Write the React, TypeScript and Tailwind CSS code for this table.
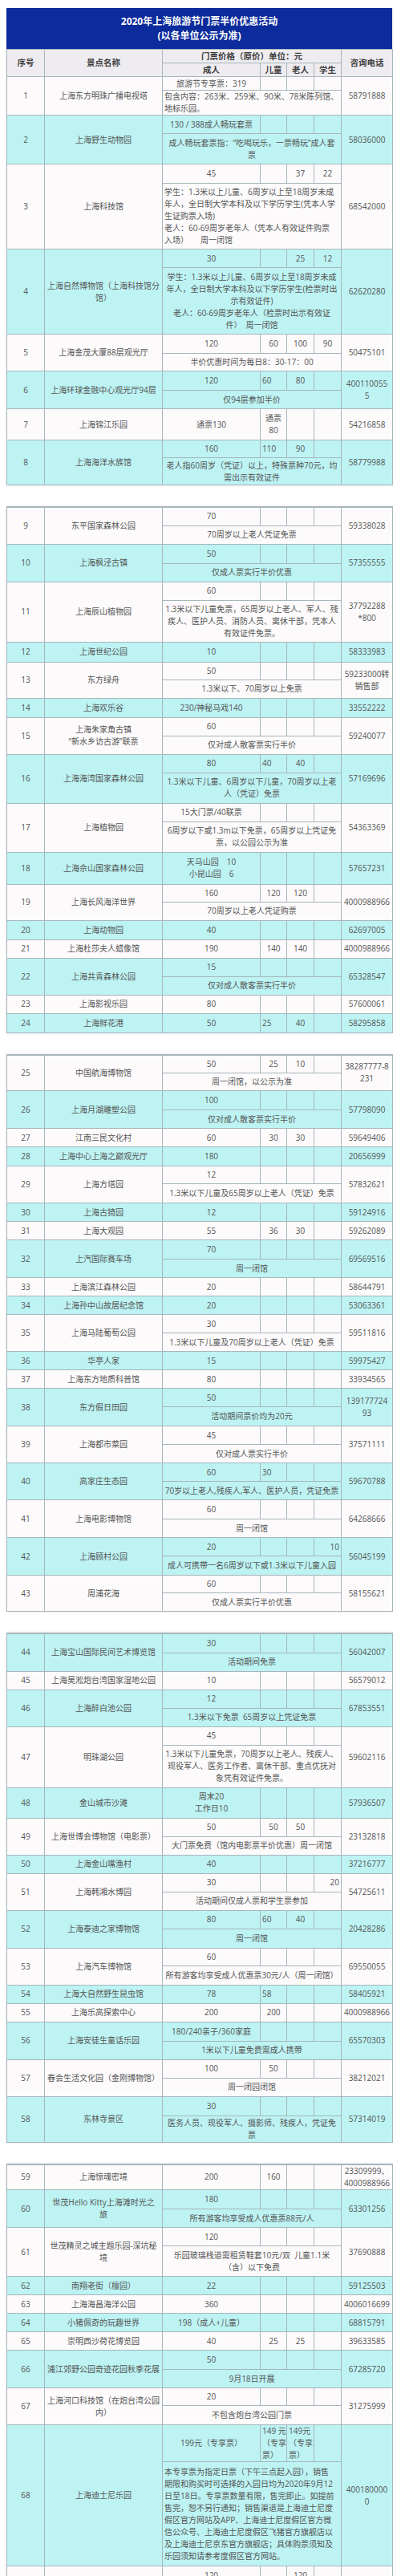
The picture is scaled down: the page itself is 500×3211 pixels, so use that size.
import React from 'react';

type P = string | { t: string; a: 'l' | 'r' };
type Row = {
  n: number;
  name: string;
  p: P[];
  tel: string;
  h: string;
  note?: string;
  nh?: string;
  left?: boolean;
};

const L = (t: string): P => ({ t, a: 'l' });
const R = (t: string): P => ({ t, a: 'r' });
const one = (t: string): P[] => [t, '', '', ''];

const seg1: Row[] = [
  { n: 1, name: '上海东方明珠广播电视塔', p: one('旅游节专享票：319'), tel: '58791888', h: 'h-[17px]', note: '包含内容：263米、259米、90米、78米陈列馆、\n地标乐园。', nh: 'h-[30px]', left: true },
  { n: 2, name: '上海野生动物园', p: one('130 / 388成人畅玩套票'), tel: '58036000', h: 'h-[23px]', note: '成人畅玩套票指：“吃喝玩乐，一票畅玩”成人套\n票', nh: 'h-[38px]' },
  { n: 3, name: '上海科技馆', p: ['45', '', '37', '22'], tel: '68542000', h: 'h-[24px]', note: '学生：1.3米以上儿童、6周岁以上至18周岁未成\n年人，全日制大学本科及以下学历学生(凭本人学\n生证购票入场)\n老人：60-69周岁老年人（凭本人有效证件购票\n入场）　　周一闭馆', nh: 'h-[82px]', left: true },
  { n: 4, name: '上海自然博物馆（上海科技馆分\n馆）', p: ['30', '', '25', '12'], tel: '62620280', h: 'h-[23px]', note: '学生：1.3米以上儿童、6周岁以上至18周岁未成\n年人，全日制大学本科及以下学历学生(检票时出\n示有效证件)\n老人：60-69周岁老年人（检票时出示有效证\n件）　周一闭馆', nh: 'h-[83px]' },
  { n: 5, name: '上海金茂大厦88层观光厅', p: ['120', '60', '100', '90'], tel: '50475101', h: 'h-[24px]', note: '半价优惠时间为每日8：30-17：00', nh: 'h-[22px]' },
  { n: 6, name: '上海环球金融中心观光厅94层', p: ['120', L('60'), '80', ''], tel: '400110055\n5', h: 'h-[24px]', note: '仅94层参加半价', nh: 'h-[23px]' },
  { n: 7, name: '上海锦江乐园', p: ['通票130', '通票\n80', '', ''], tel: '54216858', h: 'h-[39px]' },
  { n: 8, name: '上海海洋水族馆', p: ['160', L('110'), '90', ''], tel: '58779988', h: 'h-[22px]', note: '老人指60周岁（凭证）以上，特殊票种70元，均\n需出示有效证件', nh: 'h-[34px]' },
];

const seg2: Row[] = [
  { n: 9, name: '东平国家森林公园', p: one('70'), tel: '59338028', h: 'h-[23px]', note: '70周岁以上老人凭证免票', nh: 'h-[23px]' },
  { n: 10, name: '上海枫泾古镇', p: one('50'), tel: '57355555', h: 'h-[24px]', note: '仅成人票实行半价优惠', nh: 'h-[23px]' },
  { n: 11, name: '上海辰山植物园', p: one('60'), tel: '37792288\n*800', h: 'h-[23px]', note: '1.3米以下儿童免票，65周岁以上老人、军人、残\n疾人、医护人员、消防人员、离休干部，凭本人\n有效证件免票。', nh: 'h-[52px]' },
  { n: 12, name: '上海世纪公园', p: one('10'), tel: '58333983', h: 'h-[25px]' },
  { n: 13, name: '东方绿舟', p: one('50'), tel: '59233000转\n销售部', h: 'h-[22px]', note: '1.3米以下、70周岁以上免票', nh: 'h-[23px]' },
  { n: 14, name: '上海欢乐谷', p: one('230/神秘马戏140'), tel: '33552222', h: 'h-[24px]' },
  { n: 15, name: '上海朱家角古镇\n“新水乡访古游”联票', p: one('60'), tel: '59240077', h: 'h-[23px]', note: '仅对成人散客票实行半价', nh: 'h-[23px]' },
  { n: 16, name: '上海海湾国家森林公园', p: ['80', L('40'), '40', ''], tel: '57169696', h: 'h-[23px]', note: '1.3米以下儿童、6周岁以下儿童，70周岁以上老\n人（凭证）免票', nh: 'h-[38px]' },
  { n: 17, name: '上海植物园', p: one('15大门票/40联票'), tel: '54363369', h: 'h-[23px]', note: '6周岁以下或1.3m以下免票，65周岁以上凭证免\n票，以公园公示为准', nh: 'h-[38px]' },
  { n: 18, name: '上海佘山国家森林公园', p: one('天马山园　10\n小昆山园　6'), tel: '57657231', h: 'h-[40px]' },
  { n: 19, name: '上海长风海洋世界', p: ['160', '120', '120', ''], tel: '4000988966', h: 'h-[22px]', note: '70周岁以上老人凭证购票', nh: 'h-[23px]' },
  { n: 20, name: '上海动物园', p: one('40'), tel: '62697005', h: 'h-[24px]' },
  { n: 21, name: '上海杜莎夫人蜡像馆', p: ['190', '140', '140', ''], tel: '4000988966', h: 'h-[23px]' },
  { n: 22, name: '上海共青森林公园', p: one('15'), tel: '65328547', h: 'h-[23px]', note: '仅对成人散客票实行半价', nh: 'h-[23px]' },
  { n: 23, name: '上海影视乐园', p: one('80'), tel: '57600061', h: 'h-[23px]' },
  { n: 24, name: '上海鲜花港', p: ['50', L('25'), '40', ''], tel: '58295858', h: 'h-[24px]' },
];

const seg3: Row[] = [
  { n: 25, name: '中国航海博物馆', p: ['50', '25', '10', ''], tel: '38287777-8\n231', h: 'h-[23px]', note: '周一闭馆，以公示为准', nh: 'h-[22px]' },
  { n: 26, name: '上海月湖雕塑公园', p: one('100'), tel: '57798090', h: 'h-[24px]', note: '仅对成人散客票实行半价', nh: 'h-[23px]' },
  { n: 27, name: '江南三民文化村', p: ['60', '30', '30', ''], tel: '59649406', h: 'h-[23px]' },
  { n: 28, name: '上海中心上海之巅观光厅', p: one('180'), tel: '20656999', h: 'h-[24px]' },
  { n: 29, name: '上海方塔园', p: one('12'), tel: '57832621', h: 'h-[22px]', note: '1.3米以下儿童及65周岁以上老人（凭证）免票', nh: 'h-[24px]' },
  { n: 30, name: '上海古猗园', p: one('12'), tel: '59124916', h: 'h-[23px]' },
  { n: 31, name: '上海大观园', p: ['55', '36', '30', ''], tel: '59262089', h: 'h-[23px]' },
  { n: 32, name: '上汽国际赛车场', p: one('70'), tel: '69569516', h: 'h-[24px]', note: '周一闭馆', nh: 'h-[23px]' },
  { n: 33, name: '上海滨江森林公园', p: one('20'), tel: '58644791', h: 'h-[23px]' },
  { n: 34, name: '上海孙中山故居纪念馆', p: one('20'), tel: '53063361', h: 'h-[23px]' },
  { n: 35, name: '上海马陆葡萄公园', p: one('30'), tel: '59511816', h: 'h-[23px]', note: '1.3米以下儿童及70周岁以上老人（凭证）免票', nh: 'h-[23px]' },
  { n: 36, name: '华亭人家', p: one('15'), tel: '59975427', h: 'h-[23px]' },
  { n: 37, name: '上海东方地质科普馆', p: one('80'), tel: '33934565', h: 'h-[23px]' },
  { n: 38, name: '东方假日田园', p: one('50'), tel: '139177724\n93', h: 'h-[23px]', note: '活动期间票价均为20元', nh: 'h-[24px]' },
  { n: 39, name: '上海都市菜园', p: one('45'), tel: '37571111', h: 'h-[23px]', note: '仅对成人票实行半价', nh: 'h-[23px]' },
  { n: 40, name: '高家庄生态园', p: ['60', L('30'), '', ''], tel: '59670788', h: 'h-[23px]', note: '70岁以上老人,残疾人,军人、医护人员，凭证免票', nh: 'h-[23px]' },
  { n: 41, name: '上海电影博物馆', p: one('60'), tel: '64268666', h: 'h-[24px]', note: '周一闭馆', nh: 'h-[23px]' },
  { n: 42, name: '上海顾村公园', p: ['20', '', '', R('10')], tel: '56045199', h: 'h-[23px]', note: '成人可携带一名6周岁以下或1.3米以下儿童入园', nh: 'h-[24px]' },
  { n: 43, name: '周浦花海', p: one('60'), tel: '58155621', h: 'h-[22px]', note: '仅成人票实行半价优惠', nh: 'h-[23px]' },
];

const seg4: Row[] = [
  { n: 44, name: '上海宝山国际民间艺术博览馆', p: one('30'), tel: '56042007', h: 'h-[24px]', note: '活动期间免票', nh: 'h-[23px]' },
  { n: 45, name: '上海吴淞炮台湾国家湿地公园', p: one('10'), tel: '56579012', h: 'h-[23px]' },
  { n: 46, name: '上海醉白池公园', p: one('12'), tel: '67853551', h: 'h-[23px]', note: '1.3米以下免票  65周岁以上凭证免票', nh: 'h-[23px]' },
  { n: 47, name: '明珠湖公园', p: one('45'), tel: '59602116', h: 'h-[23px]', note: '1.3米以下儿童免票，70周岁以上老人、残疾人、\n现役军人、医务工作者、离休干部、重点优抚对\n象凭有效证件免票。', nh: 'h-[53px]' },
  { n: 48, name: '金山城市沙滩', p: one('周末20\n工作日10'), tel: '57936507', h: 'h-[38px]' },
  { n: 49, name: '上海世博会博物馆（电影票）', p: ['50', '50', '50', ''], tel: '23132818', h: 'h-[23px]', note: '大门票免费（馆内电影票半价优惠）周一闭馆', nh: 'h-[23px]' },
  { n: 50, name: '上海金山嘴渔村', p: one('40'), tel: '37216777', h: 'h-[23px]' },
  { n: 51, name: '上海韩湘水博园', p: ['30', '', '', R('20')], tel: '54725611', h: 'h-[23px]', note: '活动期间仅成人票和学生票参加', nh: 'h-[23px]' },
  { n: 52, name: '上海泰迪之家博物馆', p: ['80', L('60'), '40', ''], tel: '20428286', h: 'h-[23px]', note: '周一闭馆', nh: 'h-[24px]' },
  { n: 53, name: '上海汽车博物馆', p: one('60'), tel: '69550055', h: 'h-[22px]', note: '所有游客均享受成人优惠票30元/人（周一闭馆）', nh: 'h-[24px]' },
  { n: 54, name: '上海大自然野生昆虫馆', p: ['78', L('58'), '', ''], tel: '58405921', h: 'h-[23px]' },
  { n: 55, name: '上海乐高探索中心', p: ['200', '200', '', ''], tel: '4000988966', h: 'h-[23px]' },
  { n: 56, name: '上海安徒生童话乐园', p: one('180/240亲子/360家庭'), tel: '65570303', h: 'h-[24px]', note: '1米以下儿童免费需成人携带', nh: 'h-[23px]' },
  { n: 57, name: '春会生活文化园（金刚博物馆）', p: ['100', '50', '', ''], tel: '38212021', h: 'h-[23px]', note: '周一闭园闭馆', nh: 'h-[23px]' },
  { n: 58, name: '东林寺景区', p: one('30'), tel: '57314019', h: 'h-[24px]', note: '医务人员、现役军人、摄影师、残疾人，凭证免\n票', nh: 'h-[33px]' },
];

const seg5: Row[] = [
  { n: 59, name: '上海惊魂密境', p: ['200', '160', '', ''], tel: '23309999、\n4000988966', h: 'h-[32px]' },
  { n: 60, name: '世茂Hello Kitty上海滩时光之\n旅', p: one('180'), tel: '63301256', h: 'h-[24px]', note: '所有游客均享受成人优惠票88元/人', nh: 'h-[23px]' },
  { n: 61, name: '世茂精灵之城主题乐园-深坑秘\n境', p: one('120'), tel: '37690888', h: 'h-[23px]', note: '乐园玻璃栈道需租赁鞋套10元/双  儿童1.1米\n（含）以下免费', nh: 'h-[38px]' },
  { n: 62, name: '南翔老街（檀园）', p: one('22'), tel: '59125503', h: 'h-[23px]' },
  { n: 63, name: '上海海昌海洋公园', p: one('360'), tel: '4006016699', h: 'h-[23px]' },
  { n: 64, name: '小猪佩奇的玩趣世界', p: one('198（成人+儿童）'), tel: '68815791', h: 'h-[23px]' },
  { n: 65, name: '崇明西沙荷花博览园', p: ['40', '25', '25', ''], tel: '39633585', h: 'h-[23px]' },
  { n: 66, name: '浦江郊野公园奇迹花园秋季花展', p: one('50'), tel: '67285720', h: 'h-[24px]', note: '9月18日开展', nh: 'h-[23px]' },
  { n: 67, name: '上海河口科技馆（在炮台湾公园\n内）', p: one('20'), tel: '31275999', h: 'h-[22px]', note: '不包含炮台湾公园门票', nh: 'h-[24px]' },
  { n: 68, name: '上海迪士尼乐园', p: ['199元（专享票）', L('149 元\n（专享\n票）'), L('149元\n（专享\n票）'), ''], tel: '400180000\n0', h: 'h-[45px]', note: '本专享票为指定日票（下午三点起入园），销售\n期限和购买时可选择的入园日均为2020年9月12\n日至18日。专享票数量有限，售完即止。如提前\n售完，恕不另行通知；销售渠道是上海迪士尼度\n假区官方网站及APP、上海迪士尼度假区官方微\n信公众号、上海迪士尼度假区飞猪官方旗舰店以\n及上海迪士尼京东官方旗舰店；具体购票须知及\n乐园须知请参考度假区官方网站。', nh: 'h-[130px]', left: true },
  { n: 69, name: '', p: ['120', '', '120', ''], tel: '', h: 'h-[24px]', note: '', nh: 'h-[40px]' },
];

const cell = 'border border-[#a7b6bc] px-[2px] py-0 align-middle whitespace-pre leading-[15px]';

function Cols() {
  return (
    <colgroup>
      <col className="w-[47px]" />
      <col className="w-[147px]" />
      <col className="w-[122px]" />
      <col className="w-[33px]" />
      <col className="w-[34px]" />
      <col className="w-[34px]" />
      <col className="w-[64px]" />
    </colgroup>
  );
}

function Item({ r }: { r: Row }) {
  const bg = r.n % 2 === 0 ? 'bg-[#bdf3f3]' : 'bg-[#fcfafb]';
  const span = r.note !== undefined ? 2 : 1;
  return (
    <>
      <tr className={`${r.h} ${bg}`}>
        <td rowSpan={span} className={`${cell} text-center`}>{r.n}</td>
        <td rowSpan={span} className={`${cell} text-center`}>{r.name}</td>
        {r.p.map((v, i) => {
          const t = typeof v === 'string' ? v : v.t;
          const al = typeof v === 'string' ? 'text-center' : v.a === 'l' ? 'text-left' : 'text-right';
          return (
            <td key={i} className={`${cell} ${al}`}>
              {t}
            </td>
          );
        })}
        <td rowSpan={span} className={`${cell} text-center`}>{r.tel}</td>
      </tr>
      {r.note !== undefined && (
        <tr className={`${r.nh} ${bg}`}>
          <td colSpan={4} className={`${cell} ${r.left ? 'text-left' : 'text-center'}`}>
            {r.note}
          </td>
        </tr>
      )}
    </>
  );
}

function Segment({ rows, first }: { rows: Row[]; first?: boolean }) {
  return (
    <div className={`ml-[8px] w-[481px] shadow-[0_0_3px_rgba(0,0,0,0.12)] ${first ? 'mt-[10px]' : 'mt-[26px]'}`}>
      {first && (
        <div className="flex h-[51px] flex-col items-center justify-center bg-[#0c2b9c] text-[12px] font-bold leading-[18px] text-white">
          <div>2020年上海旅游节门票半价优惠活动</div>
          <div>(以各单位公示为准)</div>
        </div>
      )}
      <table className={`w-[481px] table-fixed border-collapse ${first ? '' : 'border-t-2 border-[#a7b6bc]'}`}>
        <Cols />
        <tbody>
          {first && (
            <>
              <tr className="h-[17px] bg-[#eeecf0] text-[10.5px] font-bold text-[#3d3d3d]">
                <td rowSpan={2} className={`${cell} text-center`}>序号</td>
                <td rowSpan={2} className={`${cell} text-center`}>景点名称</td>
                <td colSpan={4} className={`${cell} text-center`}>门票价格（原价）单位：元</td>
                <td rowSpan={2} className={`${cell} text-center`}>咨询电话</td>
              </tr>
              <tr className="h-[17px] bg-[#eeecf0] text-[10.5px] font-bold text-[#3d3d3d]">
                <td className={`${cell} text-center`}>成人</td>
                <td className={`${cell} text-center`}>儿童</td>
                <td className={`${cell} text-center`}>老人</td>
                <td className={`${cell} text-center`}>学生</td>
              </tr>
            </>
          )}
          {rows.map((r) => (
            <Item key={r.n} r={r} />
          ))}
        </tbody>
      </table>
    </div>
  );
}

export default function App() {
  return (
    <div className="min-h-[3211px] bg-white pb-[20px] font-['Open_Sans','Noto_Sans_CJK_SC',sans-serif] text-[10px] text-[#555]">
      <Segment rows={seg1} first />
      <Segment rows={seg2} />
      <Segment rows={seg3} />
      <Segment rows={seg4} />
      <Segment rows={seg5} />
    </div>
  );
}
